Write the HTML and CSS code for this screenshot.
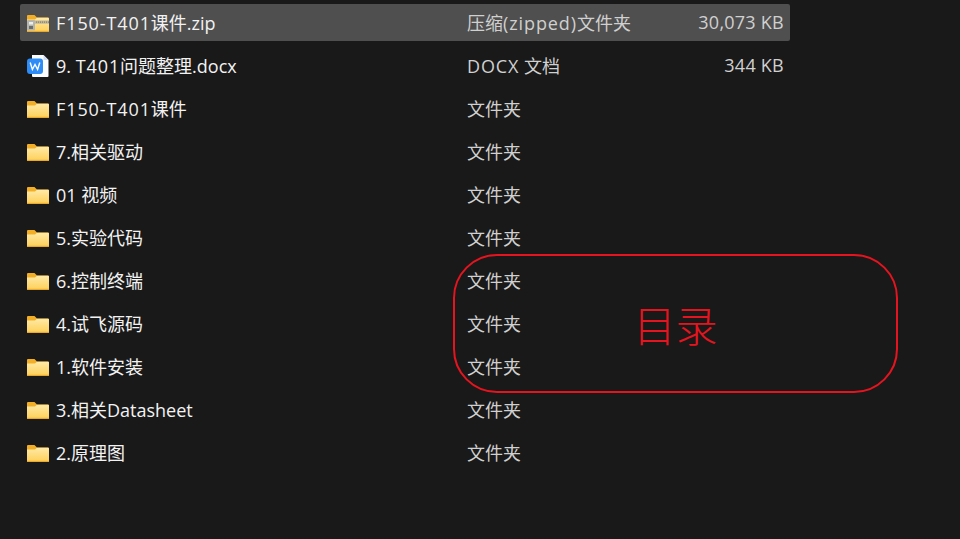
FILE: index.html
```html
<!DOCTYPE html>
<html lang="zh-CN">
<head>
    <meta charset="UTF-8">
    <meta name="viewport" content="width=device-width, initial-scale=1.0">
    <title>目录</title>
    <link rel="stylesheet" href="styles.css">
</head>
<body>

<svg class="icon-defs" width="0" height="0" aria-hidden="true">
    <defs>
        <linearGradient id="folderFront" x1="0" y1="0" x2="0" y2="1">
            <stop offset="0" stop-color="#ffeaa6"/>
            <stop offset="1" stop-color="#fdcf58"/>
        </linearGradient>
        <symbol id="folder" viewBox="0 0 22 18">
            <path d="M0 2 Q0 1 1 1 H7.5 L10 3.5 H21 Q22 3.5 22 4.5 V8 H0 Z" fill="#f2ae26"/>
            <path d="M0 5.5 H8 L10 3.8 H21 Q22 3.8 22 4.8 V17 Q22 18 21 18 H1 Q0 18 0 17 Z" fill="url(#folderFront)"/>
            <rect x="0" y="16.8" width="22" height="1.2" fill="#eba92c"/>
        </symbol>
    </defs>
</svg>

<div class="file-list">
    <div class="row selected">
        <div class="name">
            <svg class="icon" viewBox="0 0 22 18">
                <use href="#folder"/>
                <rect x="7" y="6.5" width="15" height="3.2" fill="#bdb69c"/>
                <path d="M7 8.1 H22" stroke="#77725f" stroke-width="1" stroke-dasharray="1 1"/>
                <rect x="0" y="6" width="8" height="10.5" rx="1" fill="#b5b5b0"/>
                <rect x="2" y="8" width="4" height="2.5" fill="#ecece8"/>
                <rect x="2" y="12" width="4" height="3" fill="#6d6d68"/>
            </svg>
            <span><span class="wide">F150-T401</span>课件.zip</span>
        </div>
        <div class="type">压缩<span class="wide">(zipped)</span>文件夹</div>
        <div class="size">30,073 KB</div>
    </div>
    <div class="row">
        <div class="name">
            <svg class="icon doc-icon" viewBox="0 0 22 22">
                <path d="M5 0 H16.5 L21.5 5 V21 Q21.5 22 20.5 22 H6 Q5 22 5 21 Z" fill="#fbfcfe"/>
                <path d="M16.5 0 L21.5 5 H16.5 Z" fill="#cfdcf2"/>
                <rect x="0" y="3.5" width="16" height="15.5" rx="3" fill="#2e8cf6"/>
                <path d="M3.2 7.5 L5.4 14.5 L8 9.5 L10.6 14.5 L12.8 7.5" fill="none" stroke="#fff" stroke-width="1.4"/>
            </svg>
            <span>9. <span class="wide">T401</span>问题整理.docx</span>
        </div>
        <div class="type"><span class="wide">DOCX</span> 文档</div>
        <div class="size">344 KB</div>
    </div>
    <div class="row">
        <div class="name"><svg class="icon"><use href="#folder"/></svg><span><span class="wide">F150-T401</span>课件</span></div>
        <div class="type">文件夹</div>
    </div>
    <div class="row">
        <div class="name"><svg class="icon"><use href="#folder"/></svg><span>7.相关驱动</span></div>
        <div class="type">文件夹</div>
    </div>
    <div class="row">
        <div class="name"><svg class="icon"><use href="#folder"/></svg><span>01 视频</span></div>
        <div class="type">文件夹</div>
    </div>
    <div class="row">
        <div class="name"><svg class="icon"><use href="#folder"/></svg><span>5.实验代码</span></div>
        <div class="type">文件夹</div>
    </div>
    <div class="row">
        <div class="name"><svg class="icon"><use href="#folder"/></svg><span>6.控制终端</span></div>
        <div class="type">文件夹</div>
    </div>
    <div class="row">
        <div class="name"><svg class="icon"><use href="#folder"/></svg><span>4.试飞源码</span></div>
        <div class="type">文件夹</div>
    </div>
    <div class="row">
        <div class="name"><svg class="icon"><use href="#folder"/></svg><span>1.软件安装</span></div>
        <div class="type">文件夹</div>
    </div>
    <div class="row">
        <div class="name"><svg class="icon"><use href="#folder"/></svg><span>3.相关Datasheet</span></div>
        <div class="type">文件夹</div>
    </div>
    <div class="row">
        <div class="name"><svg class="icon"><use href="#folder"/></svg><span>2.原理图</span></div>
        <div class="type">文件夹</div>
    </div>
</div>

<!-- red callout drawn over the list -->
<div class="callout">目录</div>

</body>
</html>
```

FILE: styles.css
```css
/* Basic Styling */
html, body {
    height: 100%;
}
body {
    margin: 0;
    background-color: #191919;
    color: #f2f2f2;
    font-family: "Open Sans", "Noto Sans CJK SC", sans-serif;
    font-size: 18px;
    overflow: hidden;
    position: relative;
}
.icon-defs {
    position: absolute;
}
.file-list {
    display: flex;
    flex-direction: column;
    gap: 6px;
    width: 770px;
    margin-left: 20px;
    padding-top: 4px;
}
.row {
    display: flex;
    align-items: center;
    height: 37px;
    border-radius: 2px;
}
.row.selected {
    background-color: #4f4f4f;
}
.name {
    display: flex;
    align-items: center;
    gap: 7px;
    width: 447px;
    padding-left: 7px;
    box-sizing: border-box;
    white-space: nowrap;
}
.name > span, .type, .size {
    margin-bottom: 2px;
}
.wide {
    letter-spacing: 0.9px;
}
.icon {
    width: 22px;
    height: 18px;
    flex: none;
}
.doc-icon {
    height: 22px;
}
.type {
    width: 200px;
    color: #d0d0d0;
    white-space: nowrap;
}
.size {
    flex: 1;
    padding-right: 6px;
    text-align: right;
    color: #d0d0d0;
    letter-spacing: 0.25px;
    white-space: nowrap;
}
.callout {
    position: absolute;
    left: 453px;
    top: 254px;
    width: 445px;
    height: 139px;
    box-sizing: border-box;
    border: 2px solid #e6141f;
    border-radius: 44px;
    display: flex;
    align-items: center;
    justify-content: center;
    color: #e6141f;
    font-family: "Noto Sans CJK SC", sans-serif;
    font-size: 42px;
    font-weight: 300;
}
```
